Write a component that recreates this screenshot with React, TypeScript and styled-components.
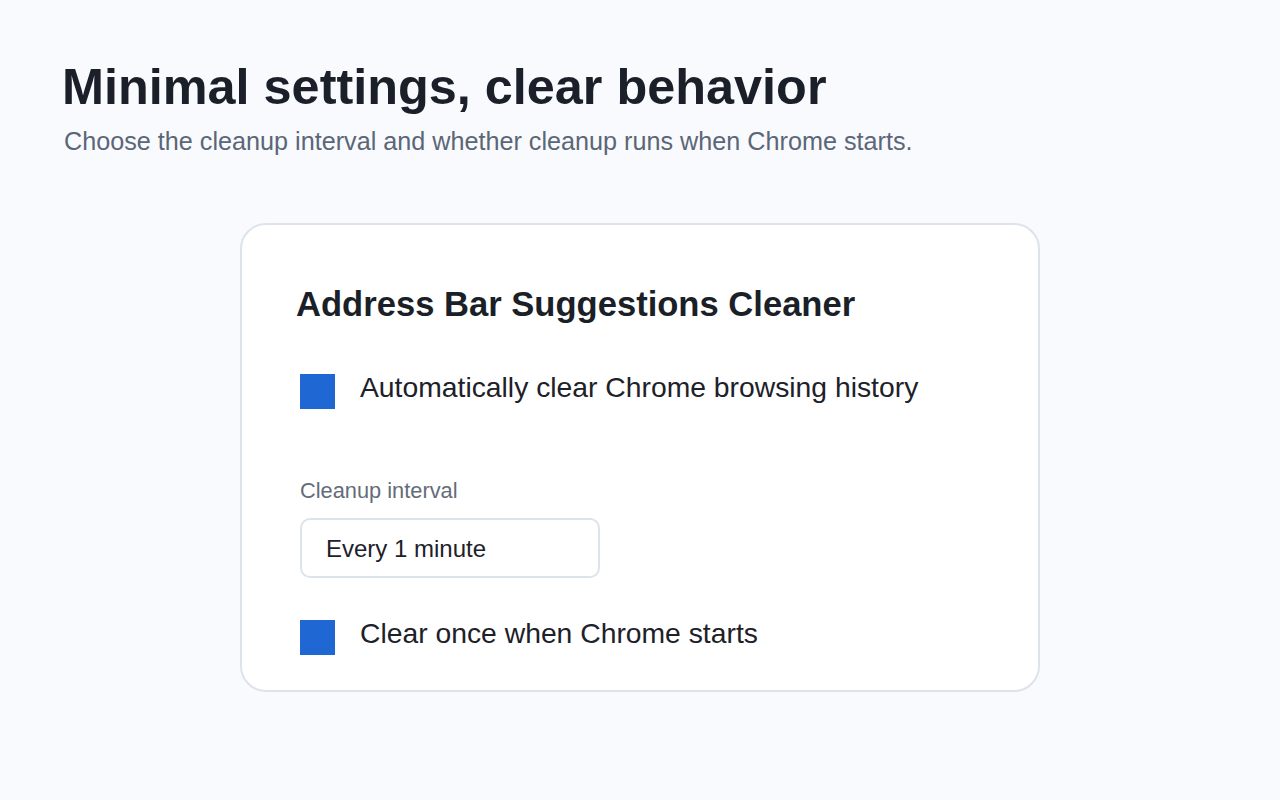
import React, { useState } from 'react';
import styled, { createGlobalStyle } from 'styled-components';

const GlobalStyle = createGlobalStyle`
  html, body {
    margin: 0;
    padding: 0;
    background: #f8fafd;
    font-family: "Liberation Sans", Arial, sans-serif;
  }
`;

const Page = styled.main`
  min-height: 800px;
  box-sizing: border-box;
  padding: 57px 62px 60px;
`;

const Heading = styled.h1`
  margin: 0;
  font-size: 50.4px;
  font-weight: 700;
  line-height: normal;
  color: #1a1f29;
`;

const Subtitle = styled.p`
  margin: 11px 0 0 2px;
  font-size: 25.2px;
  line-height: normal;
  color: #5b6677;
`;

const Card = styled.section`
  width: 800px;
  box-sizing: border-box;
  margin: 67px auto 0;
  padding: 60px 54px 35px;
  background: #ffffff;
  border: 2px solid #dde3ec;
  border-radius: 26px;
  display: flex;
  flex-direction: column;
`;

const CardTitle = styled.h2`
  margin: 0;
  font-size: 34.6px;
  font-weight: 700;
  line-height: normal;
  color: #1b1f27;
`;

const OptionRow = styled.label<{ spaced: number }>`
  display: flex;
  align-items: flex-start;
  gap: 25px;
  margin-top: ${p => p.spaced}px;
  padding-left: 4px;
  cursor: pointer;
`;

const Box = styled.span<{ checked: boolean }>`
  width: 35px;
  height: 35px;
  margin-top: 3px;
  flex: none;
  background: ${p => (p.checked ? '#1f67d3' : '#ffffff')};
  border: ${p => (p.checked ? 'none' : '2px solid #9aa3b0')};
  box-sizing: border-box;
`;

const OptionText = styled.span`
  font-size: 28.3px;
  line-height: normal;
  color: #1d2129;
`;

const FieldLabel = styled.div`
  margin: 69px 0 0 4px;
  font-size: 21.8px;
  line-height: normal;
  color: #646c79;
`;

const Select = styled.select`
  appearance: none;
  margin: 14px 0 0 4px;
  width: 300px;
  height: 60px;
  box-sizing: border-box;
  padding: 0 24px;
  border: 2px solid #dde3ec;
  border-radius: 10px;
  background: #ffffff;
  font-family: "Liberation Sans", Arial, sans-serif;
  font-size: 24px;
  color: #1d2129;
  outline: none;
`;

export default function App() {
  const [autoClear, setAutoClear] = useState(true);
  const [onStartup, setOnStartup] = useState(true);
  const [interval, setInterval] = useState('1');

  return (
    <>
      <GlobalStyle />
      <Page>
        <Heading>Minimal settings, clear behavior</Heading>
        <Subtitle>Choose the cleanup interval and whether cleanup runs when Chrome starts.</Subtitle>
        <Card>
          <CardTitle>Address Bar Suggestions Cleaner</CardTitle>
          <OptionRow spaced={47} onClick={() => setAutoClear(!autoClear)}>
            <Box checked={autoClear} />
            <OptionText>Automatically clear Chrome browsing history</OptionText>
          </OptionRow>
          <FieldLabel>Cleanup interval</FieldLabel>
          <Select value={interval} onChange={e => setInterval(e.target.value)}>
            <option value="1">Every 1 minute</option>
            <option value="5">Every 5 minutes</option>
            <option value="15">Every 15 minutes</option>
            <option value="60">Every hour</option>
          </Select>
          <OptionRow spaced={39} onClick={() => setOnStartup(!onStartup)}>
            <Box checked={onStartup} />
            <OptionText>Clear once when Chrome starts</OptionText>
          </OptionRow>
        </Card>
      </Page>
    </>
  );
}
